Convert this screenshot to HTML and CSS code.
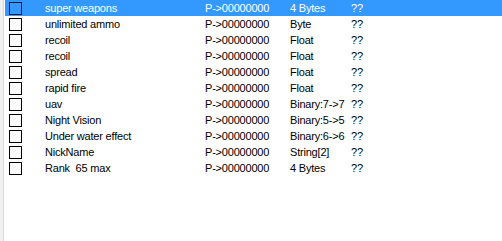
FILE: index.html
```html
<!DOCTYPE html>
<html lang="en">
<head>
    <meta charset="UTF-8">
    <title>Cheat Table</title>
    <link rel="stylesheet" href="styles.css">
</head>
<body>
    <div class="window">
        <div class="edge"></div>
        <div class="list">
            <div class="row selected"><span class="check"></span><span class="name">super weapons</span><span class="addr">P-&gt;00000000</span><span class="type">4 Bytes</span><span class="val">??</span></div>
            <div class="row"><span class="check"></span><span class="name">unlimited ammo</span><span class="addr">P-&gt;00000000</span><span class="type">Byte</span><span class="val">??</span></div>
            <div class="row"><span class="check"></span><span class="name">recoil</span><span class="addr">P-&gt;00000000</span><span class="type">Float</span><span class="val">??</span></div>
            <div class="row"><span class="check"></span><span class="name">recoil</span><span class="addr">P-&gt;00000000</span><span class="type">Float</span><span class="val">??</span></div>
            <div class="row"><span class="check"></span><span class="name">spread</span><span class="addr">P-&gt;00000000</span><span class="type">Float</span><span class="val">??</span></div>
            <div class="row"><span class="check"></span><span class="name">rapid fire</span><span class="addr">P-&gt;00000000</span><span class="type">Float</span><span class="val">??</span></div>
            <div class="row"><span class="check"></span><span class="name">uav</span><span class="addr">P-&gt;00000000</span><span class="type">Binary:7-&gt;7</span><span class="val">??</span></div>
            <div class="row"><span class="check"></span><span class="name">Night Vision</span><span class="addr">P-&gt;00000000</span><span class="type">Binary:5-&gt;5</span><span class="val">??</span></div>
            <div class="row"><span class="check"></span><span class="name">Under water effect</span><span class="addr">P-&gt;00000000</span><span class="type">Binary:6-&gt;6</span><span class="val">??</span></div>
            <div class="row"><span class="check"></span><span class="name">NickName</span><span class="addr">P-&gt;00000000</span><span class="type">String[2]</span><span class="val">??</span></div>
            <div class="row"><span class="check"></span><span class="name">Rank&nbsp; 65 max</span><span class="addr">P-&gt;00000000</span><span class="type">4 Bytes</span><span class="val">??</span></div>
        </div>
    </div>
</body>
</html>
```

FILE: styles.css
```css
* {
    box-sizing: border-box;
    margin: 0;
    padding: 0;
}

body {
    background-color: #ffffff;
    font-family: 'Liberation Sans', Arial, sans-serif;
    font-size: 11px;
    letter-spacing: -0.2px;
    color: #000000;
}

.window {
    display: flex;
    width: 502px;
    height: 241px;
}

.edge {
    width: 4px;
    background-color: #f0f0f0;
    border-right: 1px solid #d9d9d9;
    margin-right: 1px;
}

.list {
    flex: 1;
    display: flex;
    flex-direction: column;
}

.row {
    display: grid;
    grid-template-columns: 40px 160px 85px 61px 1fr;
    align-items: center;
    height: 16px;
    line-height: 16px;
    white-space: nowrap;
}

.row.selected {
    background-color: #3399ff;
    color: #ffffff;
}

.check {
    width: 13px;
    height: 13px;
    margin-left: 4px;
    border: 1px solid #000000;
    background-color: #ffffff;
}

.row.selected .check {
    background-color: #3399ff;
    border-color: #1a1a1a;
}
```
